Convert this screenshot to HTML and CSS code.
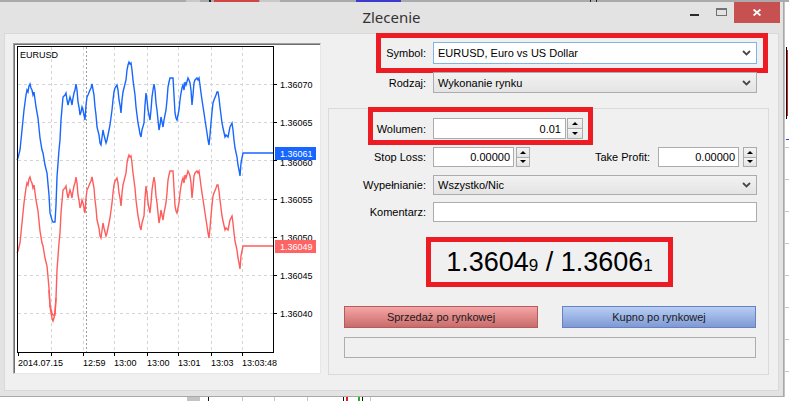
FILE: index.html
```
<!DOCTYPE html>
<html lang="pl">
<head>
<meta charset="utf-8">
<title>Zlecenie</title>
<link rel="stylesheet" href="styles.css">
</head>
<body>
<div class="top-strip"></div>
<div class="middle">
  <div class="window">
    <div class="titlebar">
      <div class="title">Zlecenie</div>
      <div class="controls">
        <span class="min"></span>
        <span class="max"></span>
        <span class="close"><svg width="8" height="7" viewBox="0 0 8 7"><path class="xmark" d="M0.6 0.5 L7.4 6.5 M7.4 0.5 L0.6 6.5"/></svg></span>
      </div>
    </div>
    <div class="client">
      <div class="chart-frame">
        <svg class="chart" width="306" height="329" viewBox="14 44 306 329">
          <defs>
            <polyline id="ln" points="17,160 18,158 20,150 22,130 24,110 26,95 27,90 28,92 29,86 30,84 31,88 32,90 33,95 34,92 36,107 38,118 40,138 42,150 43,153 45,165 47,173 49,195 50,213 52,220 53,222 55,222 56,205 57,177 59,150 60,140 61,120 63,97 65,95 66,93 67,100 68,105 70,97 71,100 72,105 73,98 74,93 75,90 76,84 77,90 78,102 79,107 80,115 81,112 82,107 83,110 84,115 85,120 86,105 87,97 88,95 90,90 91,88 92,84 94,95 95,107 96,115 97,127 99,135 100,143 101,145 103,130 104,135 106,143 107,140 109,130 110,125 112,110 113,100 114,92 115,88 117,85 118,90 119,100 120,105 121,113 122,100 123,92 124,88 126,80 127,70 128,65 129,62 130,64 131,63 132,70 133,80 135,95 136,107 137,115 138,123 139,128 140,134 141,137 142,130 144,123 145,105 146,93 147,100 148,110 149,115 150,120 151,110 152,97 153,90 154,84 155,90 156,103 157,110 158,120 159,130 160,125 161,117 162,122 163,127 164,120 166,110 167,100 168,87 169,82 170,78 173,78 174,95 175,113 176,118 177,120 178,115 179,110 180,100 181,93 182,88 183,85 184,90 185,82 186,85 188,78 189,80 190,83 191,90 192,105 193,95 194,83 195,80 197,78 198,80 199,78 200,85 201,93 202,100 204,113 205,120 207,133 208,140 209,145 210,135 211,123 212,112 213,103 214,100 216,95 217,92 218,92 219,98 220,107 221,115 222,123 223,128 225,137 226,135 228,137 229,132 230,127 231,125 232,123 233,130 234,140 235,148 237,157 238,165 239,170 240,176 241,163 242,158 243,153 273,153"/>
          </defs>
          <g class="grid">
            <line x1="18" y1="84.5" x2="273" y2="84.5"/>
            <line x1="18" y1="122.5" x2="273" y2="122.5"/>
            <line x1="18" y1="160.5" x2="273" y2="160.5"/>
            <line x1="18" y1="199.5" x2="273" y2="199.5"/>
            <line x1="18" y1="237.5" x2="273" y2="237.5"/>
            <line x1="18" y1="275.5" x2="273" y2="275.5"/>
            <line x1="18" y1="313.5" x2="273" y2="313.5"/>
            <line x1="51.5" y1="47" x2="51.5" y2="352"/>
            <line x1="83.5" y1="47" x2="83.5" y2="352"/>
            <line x1="114.5" y1="47" x2="114.5" y2="352"/>
            <line x1="147.5" y1="47" x2="147.5" y2="352"/>
            <line x1="178.5" y1="47" x2="178.5" y2="352"/>
            <line x1="211.5" y1="47" x2="211.5" y2="352"/>
            <line x1="242.5" y1="47" x2="242.5" y2="352"/>
          </g>
          <line class="daysep" x1="86.5" y1="47" x2="86.5" y2="352"/>
          <use href="#ln" class="ask"/>
          <use href="#ln" class="bid" transform="translate(0 93)"/>
          <polyline class="bid" points="49,290 50,306 51,313 52,318 53,321 54,318 55,311 56,298"/>
          <rect class="plot" x="17.5" y="46.5" width="256" height="306"/>
          <g class="ticks">
            <line x1="274" y1="84.5" x2="277" y2="84.5"/>
            <line x1="274" y1="122.5" x2="277" y2="122.5"/>
            <line x1="274" y1="160.5" x2="277" y2="160.5"/>
            <line x1="274" y1="199.5" x2="277" y2="199.5"/>
            <line x1="274" y1="237.5" x2="277" y2="237.5"/>
            <line x1="274" y1="275.5" x2="277" y2="275.5"/>
            <line x1="274" y1="313.5" x2="277" y2="313.5"/>
            <line x1="18.5" y1="353" x2="18.5" y2="356"/>
            <line x1="51.5" y1="353" x2="51.5" y2="356"/>
            <line x1="83.5" y1="353" x2="83.5" y2="356"/>
            <line x1="114.5" y1="353" x2="114.5" y2="356"/>
            <line x1="147.5" y1="353" x2="147.5" y2="356"/>
            <line x1="178.5" y1="353" x2="178.5" y2="356"/>
            <line x1="211.5" y1="353" x2="211.5" y2="356"/>
            <line x1="242.5" y1="353" x2="242.5" y2="356"/>
          </g>
          <text class="ax" x="20" y="57.5">EURUSD</text>
          <text class="ax" x="280" y="88">1.36070</text>
          <text class="ax" x="280" y="126">1.36065</text>
          <text class="ax" x="280" y="165.5">1.36060</text>
          <text class="ax" x="280" y="203">1.36055</text>
          <text class="ax" x="280" y="241">1.36050</text>
          <text class="ax" x="280" y="279">1.36045</text>
          <text class="ax" x="280" y="317">1.36040</text>
          <rect class="ask-box" x="275" y="147" width="41" height="13"/>
          <text class="ax tag" x="280" y="156.5">1.36061</text>
          <rect class="bid-box" x="275" y="240" width="41" height="13"/>
          <text class="ax tag" x="280" y="250">1.36049</text>
          <text class="ax" x="18" y="366">2014.07.15</text>
          <text class="ax" x="83" y="366">12:59</text>
          <text class="ax" x="114" y="366">13:00</text>
          <text class="ax" x="147" y="366">13:00</text>
          <text class="ax" x="178" y="366">13:01</text>
          <text class="ax" x="211" y="366">13:03</text>
          <text class="ax" x="242" y="366">13:03:48</text>
        </svg>
      </div>
      <div class="form">
        <div class="row row-symbol">
          <label class="lbl">Symbol:</label>
          <div class="combo combo-focus"><span>EURUSD, Euro vs US Dollar</span><svg class="chev" width="9" height="6" viewBox="0 0 9 6"><path d="M1 1 L4.5 4.5 L8 1"/></svg></div>
          <div class="mark mark-symbol"></div>
        </div>
        <div class="row row-rodzaj">
          <label class="lbl">Rodzaj:</label>
          <div class="combo"><span>Wykonanie rynku</span><svg class="chev" width="9" height="6" viewBox="0 0 9 6"><path d="M1 1 L4.5 4.5 L8 1"/></svg></div>
        </div>
        <div class="group">
          <div class="row row-vol">
            <label class="lbl">Wolumen:</label>
            <div class="inp inp-vol">0.01</div>
            <div class="spin spin-vol"><span class="sb"><i class="tri-up"></i></span><span class="sb"><i class="tri-down"></i></span></div>
            <div class="mark mark-vol"></div>
          </div>
          <div class="row row-sl">
            <label class="lbl">Stop Loss:</label>
            <div class="inp inp-num">0.00000</div>
            <div class="spin spin-sl"><span class="sb"><i class="tri-up"></i></span><span class="sb"><i class="tri-down"></i></span></div>
            <label class="lbl-tp">Take Profit:</label>
            <div class="inp inp-num">0.00000</div>
            <div class="spin spin-tp"><span class="sb"><i class="tri-up"></i></span><span class="sb"><i class="tri-down"></i></span></div>
          </div>
          <div class="row row-fill">
            <label class="lbl">Wypełnianie:</label>
            <div class="combo"><span>Wszystko/Nic</span><svg class="chev" width="9" height="6" viewBox="0 0 9 6"><path d="M1 1 L4.5 4.5 L8 1"/></svg></div>
          </div>
          <div class="row row-comment">
            <label class="lbl">Komentarz:</label>
            <div class="inp inp-wide"></div>
          </div>
          <div class="price"><span>1.3604<small>9</small> / 1.3606<small>1</small></span></div>
          <div class="btns">
            <button class="btn sell">Sprzedaż po rynkowej</button>
            <button class="btn buy">Kupno po rynkowej</button>
          </div>
          <div class="status"></div>
        </div>
      </div>
    </div>
  </div>
  <div class="right-strip"></div>
</div>
<div class="bottom-strip"></div>
</body>
</html>
```
FILE: styles.css
```
* { box-sizing: border-box; margin: 0; padding: 0; }

html, body { width: 789px; height: 401px; overflow: hidden; }

body {
  background: #fff;
  font-family: "Liberation Sans", Arial, sans-serif;
  font-size: 11px;
  color: #000;
}

.top-strip {
  height: 2px;
  background:
    linear-gradient(#c8c8c8, #c8c8c8) 186px 0 / 14px 2px no-repeat,
    linear-gradient(#222, #222) 209px 0 / 2px 2px no-repeat,
    linear-gradient(#d04444, #d04444) 214px 0 / 45px 2px no-repeat,
    linear-gradient(#c8c8c8, #c8c8c8) 260px 0 / 20px 2px no-repeat,
    linear-gradient(#3b3bd0, #3b3bd0) 356px 0 / 45px 2px no-repeat,
    linear-gradient(#222, #222) 590px 0 / 1px 2px no-repeat,
    linear-gradient(#222, #222) 596px 0 / 1px 2px no-repeat,
    #aaaaaa;
}

.middle { display: flex; height: 395px; }

.window {
  width: 784px;
  height: 395px;
  background: #e3e3e3;
  border-right: 1px solid #a8a8a8;
  border-bottom: 1px solid #a8a8a8;
  display: flex;
  flex-direction: column;
}

.titlebar {
  height: 31px;
  display: grid;
  grid-template-columns: 1fr auto 1fr;
  flex: none;
}

.title {
  grid-column: 2;
  font-family: "Noto Sans", "Open Sans", sans-serif;
  font-size: 15px;
  line-height: 31px;
  color: #333;
}

.controls {
  grid-column: 3;
  justify-self: end;
  display: flex;
  align-items: flex-start;
  margin-right: 3px;
}

.min {
  width: 9px;
  height: 2px;
  background: #2b2b2b;
  margin-top: 12px;
  margin-right: 17px;
}

.max {
  width: 11px;
  height: 8px;
  border: 1px solid #727272;
  border-top-width: 2px;
  margin-top: 6px;
  margin-right: 7px;
}

.close {
  width: 46px;
  height: 21px;
  background: #c75050;
  display: flex;
  align-items: center;
  justify-content: center;
}

.xmark { stroke: #fff; stroke-width: 1.8; fill: none; }

.client {
  margin-left: 4px;
  width: 775px;
  height: 358px;
  background: #f0f0f0;
  border: 1px solid #d9d9d9;
  display: flex;
  align-items: flex-start;
}

.chart-frame {
  margin: 9px 0 0 8px;
  width: 308px;
  height: 331px;
  background: #fff;
  border: 1px solid;
  border-color: #a0a0a0 #e6e6e6 #e6e6e6 #a0a0a0;
  box-shadow: inset 1px 1px 0 #6f6f6f;
  flex: none;
}

.chart { display: block; }

.grid line { stroke: #d4d4d4; stroke-width: 1; stroke-dasharray: 3 3; }
.daysep { stroke: #9a9a9a; stroke-width: 1; stroke-dasharray: 2 2; }
.plot { fill: none; stroke: #000; stroke-width: 1; }
.ticks line { stroke: #000; stroke-width: 1; }
.ask { fill: none; stroke: #1766ff; stroke-width: 1.4; stroke-linejoin: miter; }
.bid { fill: none; stroke: #ff5c5c; stroke-width: 1.4; stroke-linejoin: miter; }
.ask-box { fill: #1766ff; }
.bid-box { fill: #ff6464; }
.ax { font-family: "Liberation Sans", Arial, sans-serif; font-size: 9px; fill: #000; }
.ax.tag { fill: #fff; }

.form {
  margin: 8px 0 0 7px;
  width: 441px;
  flex: none;
}

.row {
  display: flex;
  align-items: center;
  position: relative;
}

.lbl {
  width: 98px;
  margin-right: 7px;
  text-align: right;
  flex: none;
  white-space: nowrap;
}

.group .lbl { width: 97px; }

.row-symbol { height: 22px; }
.row-rodzaj { height: 21px; margin-top: 8px; }

.combo {
  width: 324px;
  height: 100%;
  border: 1px solid #acacac;
  background: linear-gradient(#f2f2f2, #e4e4e4);
  display: flex;
  align-items: center;
  justify-content: space-between;
  padding: 0 5px 0 4px;
  flex: none;
}

.combo-focus {
  background: #fff;
  border-color: #7eb4ea;
}

.chev path { fill: none; stroke: #4a4a4a; stroke-width: 1.8; }

.group {
  margin-top: 15px;
  width: 441px;
  height: 267px;
  border: 1px solid #dadada;
  padding-top: 9px;
}

.row-vol { height: 21px; }
.row-sl { height: 20px; margin-top: 8px; }
.row-fill { height: 20px; margin-top: 8px; }
.row-comment { height: 20px; margin-top: 7px; }

.inp {
  height: 100%;
  background: #fff;
  border: 1px solid #acacac;
  display: flex;
  align-items: center;
  justify-content: flex-end;
  padding: 0 3px;
  flex: none;
}

.inp-vol { width: 133px; padding-right: 4px; }
.inp-num { width: 81px; }
.inp-wide { width: 324px; }

.spin {
  height: 100%;
  display: flex;
  flex-direction: column;
  flex: none;
}

.spin-vol { width: 16px; margin-left: 1px; }
.spin-sl { width: 14px; margin-left: 2px; }
.spin-tp { width: 14px; margin-left: 4px; margin-right: 11px; }

.sb {
  flex: 1;
  border: 1px solid #acacac;
  background: linear-gradient(#f5f5f5, #e3e3e3);
  display: flex;
  align-items: center;
  justify-content: center;
}

.sb + .sb { border-top: none; }

.tri-up {
  width: 0;
  height: 0;
  border-left: 3px solid transparent;
  border-right: 3px solid transparent;
  border-bottom: 3px solid #000;
}

.tri-down {
  width: 0;
  height: 0;
  border-left: 3px solid transparent;
  border-right: 3px solid transparent;
  border-top: 3px solid #000;
}

.lbl-tp {
  flex: 1;
  text-align: right;
  margin-right: 8px;
  white-space: nowrap;
}

.mark {
  position: absolute;
  border: 5px solid #ed1c24;
  pointer-events: none;
}

.mark-symbol { left: 48px; right: 1px; top: -9px; bottom: -9px; }
.mark-vol { left: 39px; width: 225px; top: -11px; height: 38px; }

.price {
  margin: 15px 0 0 97px;
  width: 247px;
  height: 50px;
  border: 5px solid #ed1c24;
  display: flex;
  align-items: center;
  justify-content: center;
  font-size: 27px;
  line-height: 1;
  color: #000;
  white-space: pre;
}

.price small { font-size: 17px; }

.btns {
  display: flex;
  gap: 24px;
  margin: 19px 0 0 15px;
}

.btn {
  width: 194px;
  height: 22px;
  font: inherit;
  color: #1a1a1a;
  border: 1px solid;
}

.sell {
  background: linear-gradient(#f5a6a6, #c96b6b);
  border-color: #b45c5c;
}

.buy {
  background: linear-gradient(#b7cef4, #7f9ad5);
  border-color: #6683c0;
}

.status {
  margin: 9px 0 0 15px;
  width: 412px;
  height: 21px;
  border: 1px solid #adadad;
}

.right-strip {
  width: 5px;
  height: 395px;
  border-left: 1px solid #c4c4c4;
  background:
    linear-gradient(#000, #000) 1px 45px / 1px 72px no-repeat,
    linear-gradient(#e02020, #e02020) 2px 48px / 1px 66px no-repeat,
    linear-gradient(#2040ff, #2040ff) 1px 137px / 3px 1px no-repeat,
    repeating-linear-gradient(to bottom, transparent 0 30px, #c8c8c8 30px 31px, transparent 31px 32px) 0 115px / 4px 280px no-repeat,
    #fff;
}

.bottom-strip {
  height: 4px;
  background:
    linear-gradient(#c4c4c4, #c4c4c4) 187px 0 / 13px 4px no-repeat,
    linear-gradient(#111, #111) 208px 0 / 1px 4px no-repeat,
    linear-gradient(#c8c8c8, #c8c8c8) 242px 0 / 1px 4px no-repeat,
    linear-gradient(#c8c8c8, #c8c8c8) 274px 0 / 1px 4px no-repeat,
    linear-gradient(#c8c8c8, #c8c8c8) 307px 0 / 1px 4px no-repeat,
    linear-gradient(#111, #111) 343px 0 / 1px 4px no-repeat,
    linear-gradient(#e02020, #e02020) 346px 0 / 2px 4px no-repeat,
    linear-gradient(#20b020, #20b020) 358px 0 / 2px 4px no-repeat,
    linear-gradient(#111, #111) 362px 0 / 1px 4px no-repeat,
    linear-gradient(#c8c8c8, #c8c8c8) 370px 0 / 1px 4px no-repeat,
    #fff;
}
```
